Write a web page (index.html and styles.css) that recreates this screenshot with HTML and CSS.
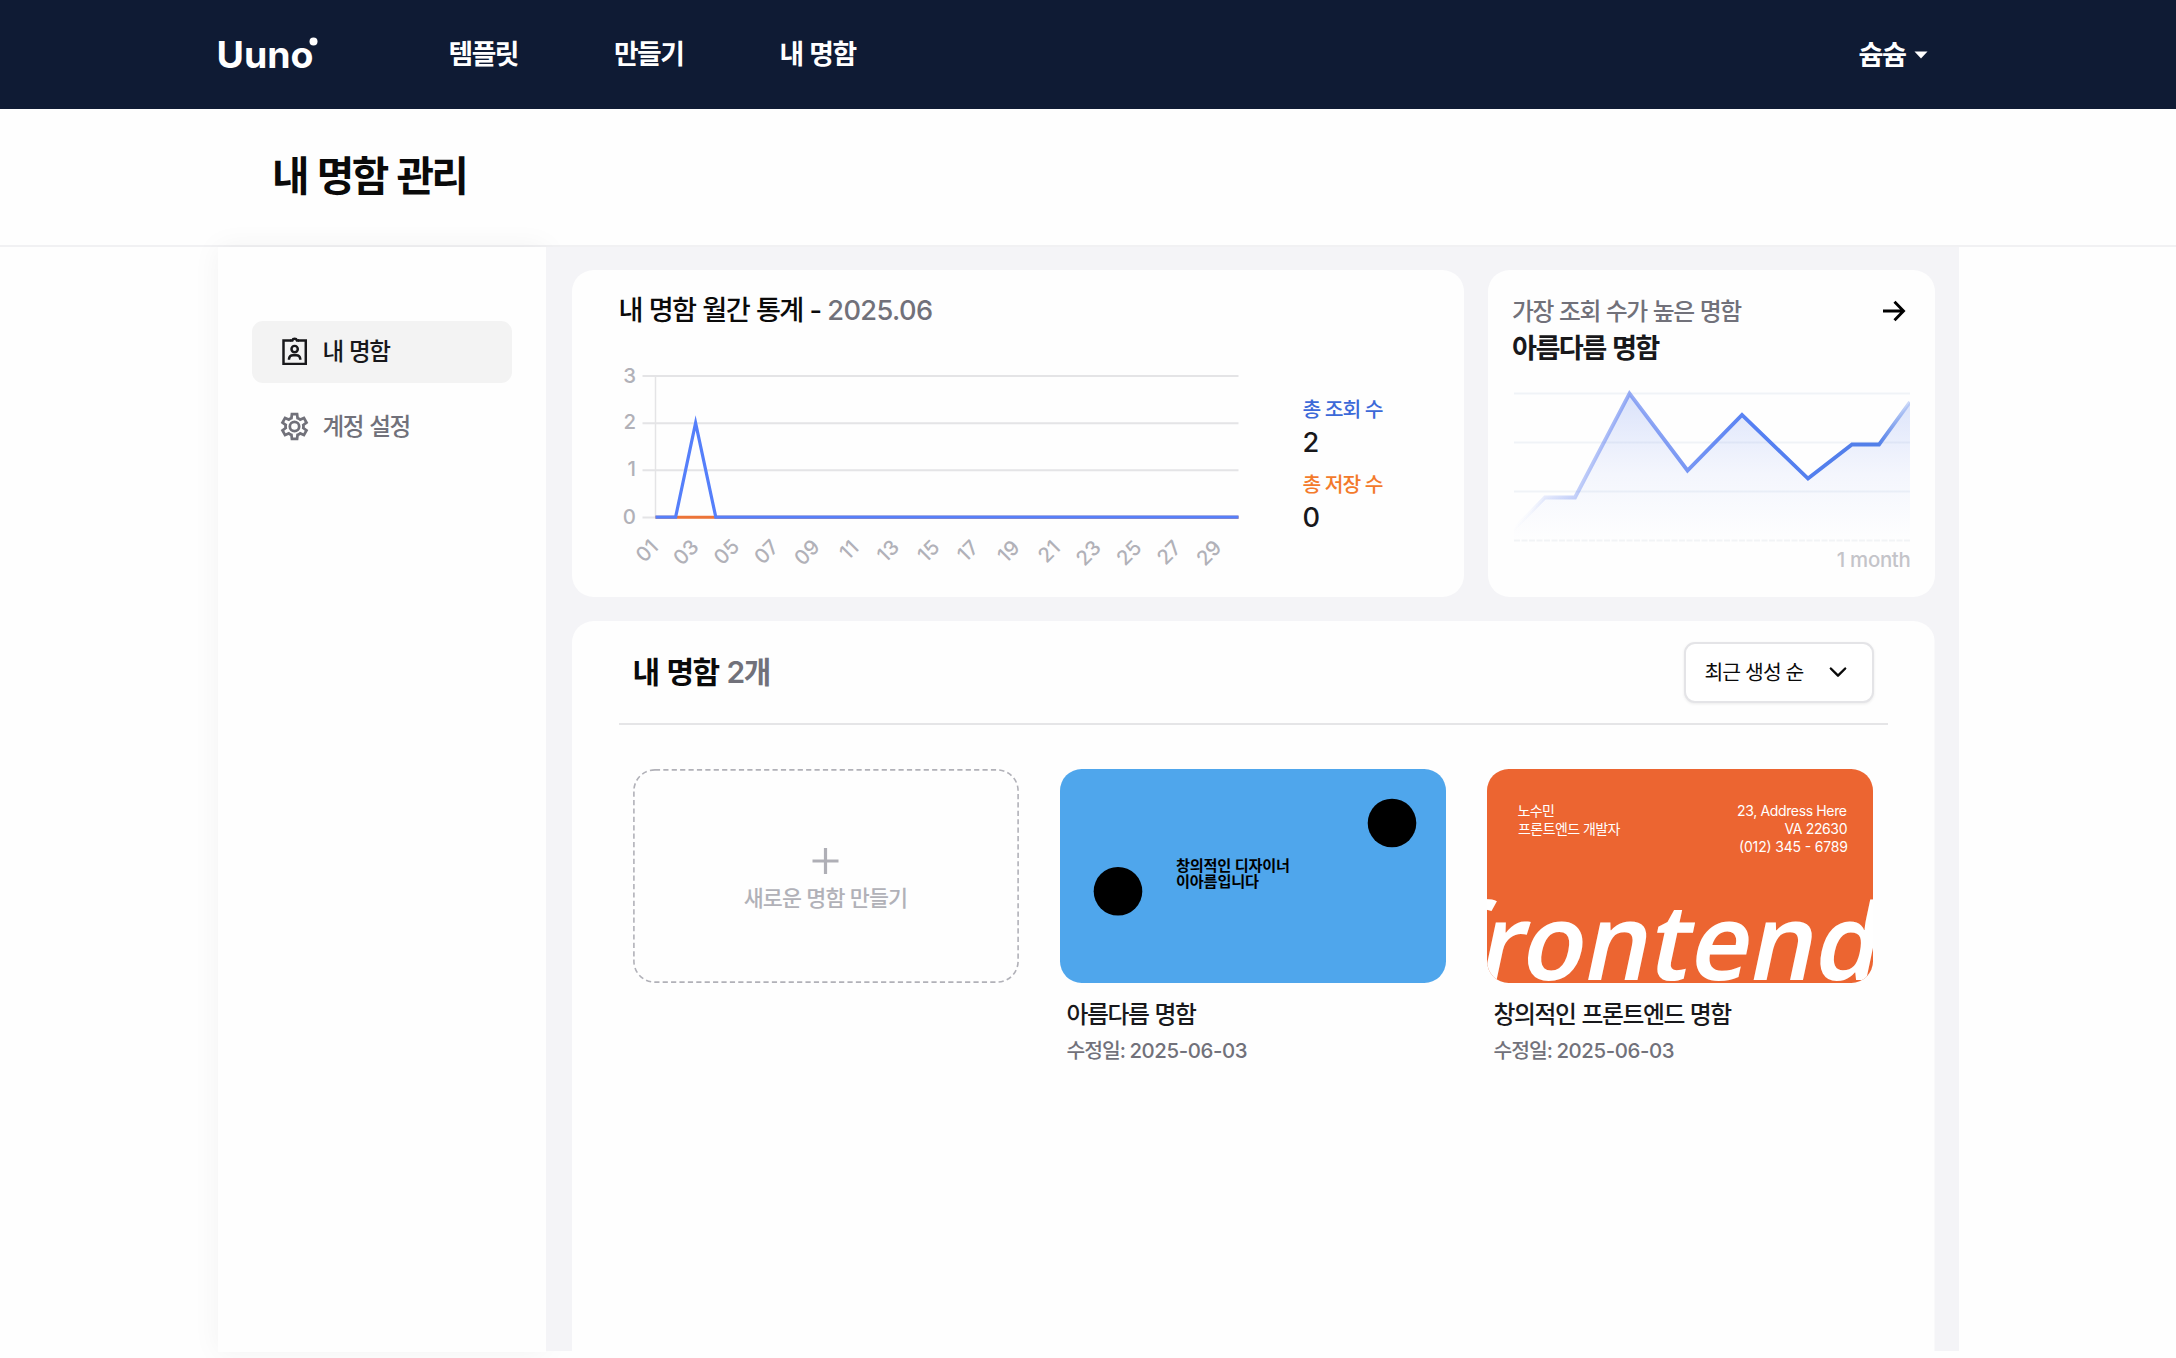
FILE: index.html
```html
<!DOCTYPE html>
<html lang="ko">
<head>
<meta charset="utf-8">
<title>Uuno - 내 명함 관리</title>
<link rel="stylesheet" href="styles.css">
</head>
<body>
<header class="header">
  <div class="header-inner">
    <a class="logo" aria-label="Uuno">
      <svg width="106" height="46" viewBox="-4 -3 106 46">
        <text class="logo-text" x="-1.500" y="33" textLength="97" lengthAdjust="spacingAndGlyphs">Uuno</text>
        <circle cx="95.500" cy="6.500" r="4" fill="#fff"/>
      </svg>
    </a>
    <nav class="nav">
      <a>템플릿</a>
      <a>만들기</a>
      <a>내 명함</a>
    </nav>
    <div class="user">
      <span>슘슘</span>
      <svg width="14" height="8" viewBox="0 0 14 8"><path d="M.5 .5h13L7 7.500z" fill="#fff"/></svg>
    </div>
  </div>
</header>
<section class="page-title"><h1>내 명함 관리</h1></section>
<div class="layout">
  <aside class="sidebar">
    <a class="menu-item active">
      <svg class="menu-icon" viewBox="0 0 24 24" fill="none" stroke="currentColor" stroke-width="1.800"><path d="M9.600 4H4v17h16.200V4H14.400"/><path d="M8.900 4h1.500a1.800 1.800 0 0 1 3.400 0h1.500"/><circle cx="12.100" cy="10.200" r="2.300"/><path d="M8 18v-.600a2.900 2.900 0 0 1 2.900-2.600h2.400a2.900 2.900 0 0 1 2.900 2.600v.600"/></svg>
      <span>내 명함</span>
    </a>
    <a class="menu-item">
      <svg class="menu-icon" viewBox="0 0 24 24" fill="currentColor"><path d="m9.250 22-.400-3.200q-.325-.125-.612-.300-.288-.175-.563-.375L4.700 19.375l-2.750-4.750 2.575-1.950Q4.500 12.500 4.500 12.338v-.675q0-.163.025-.338L1.950 9.375l2.750-4.750 2.975 1.250q.275-.200.575-.375.300-.175.600-.300L9.250 2h5.500l.400 3.200q.325.125.613.300.287.175.562.375l2.975-1.250 2.750 4.750-2.575 1.950q.025.175.025.338v.674q0 .163-.050.338l2.575 1.950-2.750 4.750-2.950-1.250q-.275.200-.575.375-.300.175-.600.300l-.400 3.200zM11 20h1.975l.350-2.650q.775-.200 1.438-.587.662-.388 1.212-.938l2.475 1.025.975-1.700-2.150-1.625q.125-.350.175-.737.050-.388.050-.788t-.050-.787q-.050-.388-.175-.738l2.150-1.625-.975-1.700-2.475 1.050q-.550-.575-1.212-.962-.663-.388-1.438-.588L13 4h-1.975l-.350 2.650q-.775.200-1.437.587-.663.388-1.213.938L5.550 7.150l-.975 1.700 2.150 1.600q-.125.375-.175.750-.050.375-.050.800 0 .400.050.775t.175.750l-2.150 1.625.975 1.700 2.475-1.050q.550.575 1.213.963.662.387 1.437.587zm1-3.600a4.400 4.400 0 1 0 0-8.800 4.400 4.400 0 0 0 0 8.800m0-2a2.400 2.400 0 1 1 0-4.800 2.400 2.400 0 0 1 0 4.800"/></svg>
      <span>계정 설정</span>
    </a>
  </aside>
  <main class="main">
    <div class="stats">
      <section class="card monthly">
        <h2 class="monthly-title">내 명함 월간 통계 - <span class="digits">2025.06</span></h2>
        <div class="monthly-body">
          <svg class="line-chart" width="630" height="220" viewBox="612 360 630 220">
            <g stroke="#e4e4e6" stroke-width="2">
              <path d="M642.500 376H1238.500M642.500 423.200H1238.500M642.500 470.200H1238.500M642.500 517.500H1238.500"/>
              <path d="M655.500 376V517" stroke-width="1.500"/>
            </g>
            <path d="M655.500 517.200H1238.500" stroke="#ec7438" stroke-width="3"/>
            <path d="M655.500 517.200H675.600L695.600 423L715.800 517.200H1238.500" fill="none" stroke="#557ffa" stroke-width="3.200" stroke-miterlimit="10"/>
            <g class="axis" text-anchor="end">
              <text x="636" y="382.500">3</text><text x="636" y="429">2</text><text x="636" y="476">1</text><text x="636" y="523.500">0</text>
            </g>
            <g class="axis" text-anchor="middle">
              <text transform="translate(647 551) rotate(-45)" y="7">01</text>
              <text transform="translate(686 552.500) rotate(-45)" y="7">03</text>
              <text transform="translate(726.500 552) rotate(-45)" y="7">05</text>
              <text transform="translate(766.500 552) rotate(-45)" y="7">07</text>
              <text transform="translate(807 552.500) rotate(-45)" y="7">09</text>
              <text transform="translate(849 550) rotate(-45)" y="7">11</text>
              <text transform="translate(888 551) rotate(-45)" y="7">13</text>
              <text transform="translate(928.500 551) rotate(-45)" y="7">15</text>
              <text transform="translate(968 551) rotate(-45)" y="7">17</text>
              <text transform="translate(1008.500 551.500) rotate(-45)" y="7">19</text>
              <text transform="translate(1049 551.500) rotate(-45)" y="7">21</text>
              <text transform="translate(1088.500 553) rotate(-45)" y="7">23</text>
              <text transform="translate(1129 553) rotate(-45)" y="7">25</text>
              <text transform="translate(1169 552.500) rotate(-45)" y="7">27</text>
              <text transform="translate(1209 553) rotate(-45)" y="7">29</text>
            </g>
          </svg>
          <dl class="totals">
            <dt class="views">총 조회 수</dt><dd>2</dd>
            <dt class="saves">총 저장 수</dt><dd>0</dd>
          </dl>
        </div>
      </section>
      <section class="card top-card">
        <div class="top-head">
          <span class="top-label">가장 조회 수가 높은 명함</span>
          <svg width="24" height="24" viewBox="0 0 24 24" fill="none" stroke="#000" stroke-width="2.900"><path d="M1 12h20M12.500 2.700l9 9.300-9 9.300"/></svg>
        </div>
        <strong class="top-name">아름다름 명함</strong>
        <svg class="mini-chart" width="396" height="160" viewBox="1514 386 396 160">
          <defs>
            <linearGradient id="line" gradientUnits="userSpaceOnUse" x1="1514" y1="0" x2="1910" y2="0">
              <stop offset="0" stop-color="#557ee8" stop-opacity="0"/><stop offset=".04" stop-color="#5f80f0" stop-opacity=".04"/><stop offset=".15" stop-color="#5f80f0" stop-opacity=".35"/><stop offset=".3" stop-color="#5f80f0" stop-opacity=".65"/><stop offset=".6" stop-color="#5580f3"/><stop offset=".92" stop-color="#527fe8"/><stop offset="1" stop-color="#527fe8" stop-opacity=".25"/>
            </linearGradient>
            <linearGradient id="area" x1="0" y1="0" x2="0" y2="1">
              <stop offset="0" stop-color="#5078eb" stop-opacity=".21"/><stop offset=".55" stop-color="#6e8cf0" stop-opacity=".07"/><stop offset="1" stop-color="#6e8cf0" stop-opacity="0"/>
            </linearGradient>
          </defs>
          <path d="M1514 393.500H1910M1514 442.500H1910M1514 491.500H1910" stroke="#f0f3f7" stroke-width="2"/>
          <path d="M1514 540.500H1910" stroke="#f2f4f6" stroke-width="2" stroke-dasharray="6 1.500"/>
          <path d="M1514 529L1545 497.500H1575L1629.500 393.500L1687.500 470.500L1742 415L1808 478.500L1852 444.500H1879L1910 402V541H1514z" fill="url(#area)"/>
          <path d="M1514 529L1545 497.500H1575L1629.500 393.500L1687.500 470.500L1742 415L1808 478.500L1852 444.500H1879L1910 402" fill="none" stroke="url(#line)" stroke-width="3.800"/>
        </svg>
        <span class="period">1 month</span>
      </section>
    </div>
    <section class="card list">
      <div class="list-head">
        <h2>내 명함 <span>2개</span></h2>
        <button class="select"><span>최근 생성 순</span>
          <svg width="18" height="12" viewBox="0 0 18 12" fill="none" stroke="#0a0a0a" stroke-width="2.400" stroke-linecap="round" stroke-linejoin="round"><path d="M1.800 2.500l7.200 7.200L16.200 2.500"/></svg>
        </button>
      </div>
      <div class="grid">
        <div class="new-card">
          <svg class="dash" width="386" height="214" viewBox="0 0 386 214"><rect x=".9" y=".9" width="384.200" height="212.200" rx="21" fill="none" stroke="#b1b1b8" stroke-width="1.600" stroke-dasharray="5.200 3.200"/></svg>
          <svg width="28" height="28" viewBox="0 0 28 28"><path d="M13.500 1v26M.5 14h26" stroke="#afafb6" stroke-width="3.200"/></svg>
          <span>새로운 명함 만들기</span>
        </div>
        <article>
          <svg class="thumb" width="386" height="214" viewBox="1060 769 386 214">
            <rect x="1060" y="769" width="386" height="215" fill="#4fa6ec"/>
            <circle cx="1118" cy="891.300" r="24.300"/><circle cx="1392" cy="823" r="24.300"/>
            <g class="blue-text"><text x="1176" y="871" textLength="114">창의적인 디자이너</text><text x="1176" y="887" textLength="83">이아름입니다</text></g>
          </svg>
          <h3>아름다름 명함</h3>
          <p>수정일: <span>2025-06-03</span></p>
        </article>
        <article>
          <svg class="thumb" width="386" height="214" viewBox="1487 769 386 214">
            <rect x="1487" y="769" width="386" height="215" fill="#ec6531"/>
            <g class="orange-text"><text x="1517.500" y="815.500" textLength="37.500">노수민</text><text x="1518" y="834" textLength="102.500">프론트엔드 개발자</text>
            <g text-anchor="end"><text x="1847" y="816" textLength="110">23, Address Here</text><text x="1847.500" y="834" textLength="63">VA 22630</text><text x="1848" y="851.500" textLength="109">(012) 345 - 6789</text></g></g>
            <text class="frontend" transform="translate(1438 980) skewX(-12)" textLength="436" lengthAdjust="spacingAndGlyphs">frontend</text>
          </svg>
          <h3>창의적인 프론트엔드 명함</h3>
          <p>수정일: <span>2025-06-03</span></p>
        </article>
      </div>
    </section>
  </main>
</div>
</body>
</html>
```
FILE: styles.css
```css
* { box-sizing: border-box; }
body {
  margin: 0;
  height: 1358px;
  overflow: hidden;
  background: #fefefe;
  color: #0a0a0a;
  font-family: Inter, "Noto Sans CJK KR", sans-serif;
}
h1, h2, h3, p, dl, dd { margin: 0; }
svg { display: block; flex: none; }

.header { height: 109px; background: #0f1b34; color: #fff; }
.header-inner {
  width: 1741px;
  height: 109px;
  margin: 0 auto;
  display: flex;
  align-items: center;
}
.logo { margin-left: -4px; }
.logo-text { font: 700 37px Inter, sans-serif; fill: #fff; }
.nav {
  display: flex;
  gap: 96px;
  margin-left: 129px;
  padding-bottom: 4px;
  font-size: 26.800px;
  font-weight: 600;
  letter-spacing: -1.500px;
  word-spacing: 1.500px;
}
.user {
  display: flex;
  align-items: center;
  gap: 8px;
  margin-left: auto;
  margin-right: 31px;
  font-size: 27.2px;
  font-weight: 700;
  letter-spacing: -1.500px;
}
.user span { padding-bottom: 4px; }

.page-title {
  height: 138px;
  border-bottom: 2px solid #f1f1f3;
  padding: 41px 0 0 272px;
}
.page-title h1 { font-size: 40.8px; line-height: 52px; font-weight: 700; letter-spacing: -2.700px; word-spacing: 3px; }

.layout { width: 1741px; height: 1104px; margin: 0 auto; display: flex; }
.sidebar {
  width: 328px;
  height: 1105px;
  background: #fefefe;
  padding: 74px 34px 0;
  display: flex;
  flex-direction: column;
  gap: 13.5px;
  box-shadow: 0 0 27px rgba(0, 0, 0, .05);
}
.menu-item {
  height: 61.5px;
  border-radius: 11px;
  display: flex;
  align-items: center;
  gap: 12px;
  padding-left: 26px;
  color: #71717a;
  font-size: 23.600px;
  font-weight: 500;
  letter-spacing: -1.500px;
  word-spacing: 1.500px;
}
.menu-item span { padding-bottom: 4px; }
.menu-item.active { background: #f3f3f3; color: #18181b; }
.menu-icon { width: 33px; height: 33px; }

.main {
  position: relative;
  flex: 1;
  background: #f4f4f7;
  padding: 23px 24px 0 26px;
  display: flex;
  flex-direction: column;
  gap: 24px;
}
.stats { display: flex; gap: 24px; height: 327px; }
.card { background: #fefefe; border-radius: 21.760px; }

.monthly { flex: 1; padding: 23px 0 0 47px; }
.monthly-title { font-size: 27.2px; line-height: 36px; font-weight: 500; letter-spacing: -1.550px; word-spacing: 1px; }
.monthly-title .digits { color: #71717a; letter-spacing: -.6px; }
.monthly-body { display: flex; margin: 31px 0 0 -7px; }
.axis { font: 500 20.400px Inter, sans-serif; fill: #b1b1b8; }
.totals { margin: 36px 0 0 61px; }
.totals dt { font-size: 20.400px; line-height: 28px; font-weight: 500; letter-spacing: -1px; }
.totals dd { font-size: 27.2px; line-height: 38px; font-weight: 500; color: #18181b; margin-bottom: 8.500px; }
.views { color: #3c69d8; }
.saves { color: #f37a2b; }

.top-card { width: 446.500px; padding: 24px 24px 0; display: flex; flex-direction: column; }
.top-head { display: flex; justify-content: space-between; align-items: center; height: 34px; padding-right: 5px; }
.top-label { font-size: 23.800px; font-weight: 500; color: #71717a; letter-spacing: -1.400px; word-spacing: 1px; padding-bottom: 3px; }
.top-name { font-size: 27.2px; line-height: 38px; font-weight: 600; color: #18181b; letter-spacing: -1.600px; word-spacing: 1px; margin-top: 2px; }
.mini-chart { margin: 18px 0 0 1.500px; }
.period { font-size: 20.400px; line-height: 26px; font-weight: 500; color: #c4c4c9; letter-spacing: -.3px; text-align: right; margin-top: 1px; }

.list { height: 780px; padding: 0 47px; margin-bottom: -100px; flex: none; clip-path: inset(0 0 50px 0); }
.list-head {
  height: 104px;
  border-bottom: 2px solid #e5e5e7;
  display: flex;
  justify-content: space-between;
  align-items: center;
  padding: 0 14px;
}
.list-head h2 { font-size: 30px; font-weight: 600; letter-spacing: -1.500px; word-spacing: 1.800px; padding-bottom: 4px; }
.list-head h2 span { color: #71717a; }
.select {
  width: 190px;
  height: 61px;
  border: 2px solid #e4e4e7;
  border-radius: 11px;
  background: #fff;
  box-shadow: 0 1px 3px rgba(0, 0, 0, .08);
  display: flex;
  align-items: center;
  justify-content: space-between;
  padding: 0 25px 0 19px;
  font: 400 20.400px Inter, "Noto Sans CJK KR", sans-serif;
  letter-spacing: -.9px;
  color: #0a0a0a;
}
.select span { padding-bottom: 2px; }
.grid { display: grid; grid-template-columns: repeat(3, 386px); gap: 41px; padding: 44px 14px 0; }
.new-card {
  position: relative;
  height: 214px;
  display: flex;
  flex-direction: column;
  align-items: center;
  padding-top: 78px;
  color: #b1b1b8;
  font-size: 21.760px;
  line-height: 30px;
  font-weight: 500;
  letter-spacing: -.8px;
  gap: 8px;
}
.dash { position: absolute; inset: 0; }
.thumb { border-radius: 21.760px; }
.blue-text { font: 700 15.200px/1 "Noto Sans CJK KR", sans-serif; fill: #000; }
.orange-text { font: 400 14px Inter, "Noto Sans CJK KR", sans-serif; fill: #fff; }
.frontend { font: 600 106px "Noto Sans", sans-serif; fill: #fff; }
article h3 { font-size: 23.800px; line-height: 32px; font-weight: 500; color: #18181b; letter-spacing: -1.400px; word-spacing: 1px; margin: 16px 0 0 7px; }
article p { font-size: 20.400px; line-height: 28px; font-weight: 500; color: #71717a; letter-spacing: -1px; margin: 6px 0 0 7px; }
article p span { letter-spacing: -.400px; }
```
